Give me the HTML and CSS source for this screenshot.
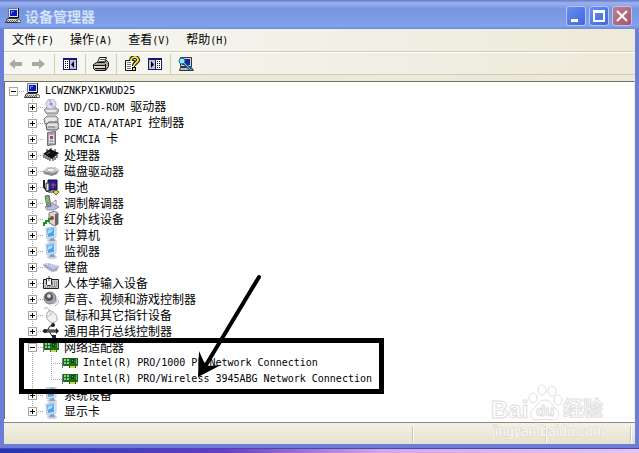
FILE: index.html
```
<!DOCTYPE html>
<html lang="zh-CN">
    <head>
        <meta charset="UTF-8" />
        <meta name="viewport" content="width=device-width, initial-scale=1.0" />
        <title>设备管理器</title>
        <link rel="stylesheet" href="styles.css">
    </head>
    <body>
        <!-- Shared icons -->
        <svg class="sprite" aria-hidden="true">
            <symbol id="pc" viewBox="0 0 16 16">
                <path d="M4 0h9v9H4z" fill="#e4e4ec" />
                <path d="M3.5 9.5v-9h9" fill="none" stroke="#777" />
                <path d="M13 0h1v10H4V9h9z" fill="#111" />
                <path d="M5 2h7v6H5z" fill="#0a18c8" />
                <path d="M6 3h3v1H7v2H6z" fill="#5a8cff" />
                <path d="M2.500 10.500h10l2 4h-14z" fill="#d4d4d4" stroke="#333" />
                <path d="M3 12.500h9M2 13.500h9" stroke="#666" stroke-dasharray="1 1" />
                <path d="M12.500 14.500c-1-4 4-4 3 0z" fill="#eee" stroke="#555" />
            </symbol>
            <symbol id="monitor" viewBox="0 0 16 16">
                <ellipse cx="9" cy="14" rx="5" ry="2" fill="#ccd3e4" />
                <path d="M7 11h4l1 3H6z" fill="#8e9ac0" />
                <path d="M3 1l10-1v10l-9 2z" fill="#dbe7f5" stroke="#b4c6de" />
                <path d="M4 2l7-1v8l-6 1z" fill="#49a4e8" />
                <path d="M5 3l5-1-1 3-4 2z" fill="#a6dcfb" />
            </symbol>
            <symbol id="card" viewBox="0 0 16 16">
                <path d="M1 3h15v8h-2v2H7v-2H1z" fill="#176b22" />
                <path d="M0 3h1v10H0z" fill="#777" />
                <path d="M2 4h2v2H2zM5 4h2v2H5zM2 7h2v2H2zM5 7h2v2H5z" fill="#8fd28a" />
                <path d="M9 4h4v4H9z" fill="#0c4a14" />
                <path d="M10 5h1v1h-1zM12 6h1v1h-1zM14 4h1v5h-1z" fill="#58b851" />
                <path d="M8 11h5v2H8z" fill="#e3cf35" />
            </symbol>
        </svg>

        <div class="window">
            <header class="titlebar">
                <svg class="icon"><use href="#pc" /></svg>
                <h1>设备管理器</h1>
                <div class="controls">
                    <button class="control" aria-label="最小化"><svg viewBox="0 0 18 18"><path d="M4 12h7v3H4z" fill="#fff" /></svg></button>
                    <button class="control" aria-label="最大化"><svg viewBox="0 0 18 18"><path d="M4 4h10v10H4zM4 5h10" fill="none" stroke="#fff" stroke-width="2" /></svg></button>
                    <button class="control close" aria-label="关闭"><svg viewBox="0 0 18 18"><path d="M4 4l10 10M14 4L4 14" stroke="#fff" stroke-width="2" /></svg></button>
                </div>
            </header>

            <nav class="menubar">
                <button>文件<span class="latin">(F)</span></button>
                <button>操作<span class="latin">(A)</span></button>
                <button>查看<span class="latin">(V)</span></button>
                <button>帮助<span class="latin">(H)</span></button>
            </nav>

            <div class="toolbar">
                <div class="group">
                    <button aria-label="后退"><svg class="icon" viewBox="0 0 16 16"><path d="M1 8l6-5v3h7v4H7v3z" fill="#aaa99a" /></svg></button>
                    <button aria-label="前进"><svg class="icon" viewBox="0 0 16 16"><path d="M14 8L8 3v3H1v4h7v3z" fill="#aaa99a" /></svg></button>
                </div>
                <div class="group">
                    <button aria-label="显示控制台树"><svg class="icon" viewBox="0 0 16 16">
                        <path d="M1 2h14v12H1z" fill="#17176f" />
                        <path d="M2 4h5v9H2z" fill="#fff" />
                        <path d="M8 4h6v9H8z" fill="#c3c3d8" />
                        <path d="M3 5h1v1H3zM5 5h1v1H5zM3 7h1v1H3zM5 7h1v1H5zM3 9h1v1H3zM5 9h1v1H5zM3 11h1v1H3zM5 11h1v1H5z" />
                        <path d="M12 5v7L9 8.500z" />
                    </svg></button>
                </div>
                <div class="group">
                    <button aria-label="打印"><svg class="icon" viewBox="0 0 16 16">
                        <path d="M4.500 6.500l2-5h7l-2 5z" fill="#fff" stroke="#111" />
                        <path d="M7 3.500h5M6 5.500h5" stroke="#555" />
                        <path d="M.5 8.500l3-2h8l2-2 2 2v4l-3 4h-10l-2-2z" fill="#a5a59c" stroke="#111" />
                        <path d="M1 9h11v3H1z" fill="#deddd0" />
                        <path d="M1 9.500h11M2 12.500h10M12.500 8v6" stroke="#111" />
                        <path d="M9 11.500h2" stroke="#e5d21a" />
                    </svg></button>
                </div>
                <div class="group">
                    <button aria-label="帮助"><svg class="icon" viewBox="0 0 16 16">
                        <path d="M1.500 4.500h9v10h-9z" fill="#fff" stroke="#111" />
                        <path d="M3 6.500h4M3 8.500h4M3 10.500h4M3 12.500h4" stroke="#777" />
                        <path d="M7 5c0-5 7-5 7-1 0 3-4 2-4 6" fill="none" stroke="#111" stroke-width="4" />
                        <path d="M7 5c0-5 7-5 7-1 0 3-4 2-4 6" fill="none" stroke="#f5e32a" stroke-width="2" />
                        <path d="M8 11h4v4H8z" />
                        <path d="M9 12h2v2H9z" fill="#f5e32a" />
                    </svg></button>
                    <button aria-label="显示操作窗格"><svg class="icon" viewBox="0 0 16 16">
                        <path d="M1 2h14v12H1z" fill="#17176f" />
                        <path d="M2 4h6v9H2z" fill="#c3c3d8" />
                        <path d="M9 4h5v9H9z" fill="#fff" />
                        <path d="M10 5h1v1h-1zM12 5h1v1h-1zM10 7h1v1h-1zM12 7h1v1h-1zM10 9h1v1h-1zM12 9h1v1h-1zM10 11h1v1h-1zM12 11h1v1h-1z" />
                        <path d="M4 5v7l3-3.500z" />
                    </svg></button>
                </div>
                <div class="group">
                    <button aria-label="扫描硬件改动"><svg class="icon" viewBox="0 0 16 16">
                        <path d="M2.500 1.500h11v9h-11z" fill="#d8d8d8" stroke="#333" />
                        <path d="M4 3h8v6H4z" fill="#1420a4" />
                        <path d="M2.500 11.500h11l2 3h-14z" fill="#bbb" stroke="#333" />
                        <circle cx="4" cy="5" r="3" fill="#8de6f5" stroke="#176c9c" />
                        <path d="M6 7l7 7" stroke="#125795" stroke-width="3" />
                        <path d="M6 7l7 7" stroke="#56d2ed" />
                    </svg></button>
                </div>
            </div>

            <main class="pane">
                <ul class="tree">
                    <li>
                        <div class="row"><button class="toggle open" aria-label="折叠"></button><svg class="icon"><use href="#pc" /></svg><span class="latin">LCWZNKPX1KWUD25</span></div>
                        <ul>
                            <li><div class="row"><button class="toggle" aria-label="展开"></button><svg class="icon" viewBox="0 0 16 16">
                                <path d="M1 11l3-3h8l4 3-2 4H4z" fill="#b9b9bd" stroke="#888" />
                                <path d="M2 11h12l-2 2H4z" fill="#eee" />
                                <circle cx="8" cy="5" r="5" fill="#dfe0f3" stroke="#b4b4c4" />
                                <path d="M8 5l-3-4 3-1zM8 5l4 3-2 2z" fill="#b5b8ef" />
                                <circle cx="8" cy="5" r="1" fill="#fff" stroke="#777" />
                            </svg><span><span class="latin">DVD/CD-ROM </span>驱动器</span></div></li>
                            <li><div class="row"><button class="toggle" aria-label="展开"></button><svg class="icon" viewBox="0 0 16 16">
                                <path d="M1 4l3-3h9l2 2v4l-2 2H2z" fill="#d4d4d4" stroke="#777" />
                                <path d="M2 4h11M3 6h9" stroke="#fff" />
                                <path d="M3 10l3-3h8l2 2v4l-2 2H4z" fill="#c9c9c9" stroke="#555" />
                                <path d="M4 10h10" stroke="#fff" />
                                <path d="M5 12h7" stroke="#777" />
                            </svg><span><span class="latin">IDE ATA/ATAPI </span>控制器</span></div></li>
                            <li><div class="row"><button class="toggle" aria-label="展开"></button><svg class="icon" viewBox="0 0 16 16">
                                <path d="M4.500 1.500l8-1v13l-8 1z" fill="#a6a6b2" stroke="#6c6c76" />
                                <path d="M6 4h5v8H6z" fill="#dedee8" />
                                <path d="M7 5h3v3H7z" fill="#b44" />
                                <path d="M7 10h3" stroke="#667" />
                            </svg><span><span class="latin">PCMCIA </span>卡</span></div></li>
                            <li><div class="row"><button class="toggle" aria-label="展开"></button><svg class="icon" viewBox="0 0 16 16">
                                <path d="M0 7l7-5 9 4-7 6z" fill="#111" />
                                <path d="M1 8v3M3 9v3M5 10v3M7 11v3M10 11v3M12 10v3M14 8v3M4 2v3M12 2v4M8 1v2" stroke="#111" />
                                <path d="M4 7l3-2" stroke="#777" />
                            </svg><span>处理器</span></div></li>
                            <li><div class="row"><button class="toggle" aria-label="展开"></button><svg class="icon" viewBox="0 0 16 16">
                                <path d="M0 8l5-4h7l4 3-2 4-5 2-8-2z" fill="#8e8e91" />
                                <path d="M0 8l5-4h7l4 3-6 3z" fill="#d6d6d8" />
                                <ellipse cx="8" cy="7" rx="4" ry="2" fill="#f3f3f3" stroke="#aaa" />
                                <path d="M11 11h2" stroke="#4b4" />
                            </svg><span>磁盘驱动器</span></div></li>
                            <li><div class="row"><button class="toggle" aria-label="展开"></button><svg class="icon" viewBox="0 0 16 16">
                                <path d="M1 1v7l3 4h4" fill="none" stroke="#222" stroke-width="2" />
                                <path d="M5 1h9v10H5z" fill="#1622a8" stroke="#111" />
                                <path d="M3 4h3v8H3z" fill="#e2e2e2" stroke="#333" />
                                <path d="M10 4v5M8 6h5" stroke="#f33" />
                                <path d="M6 12h7l1 2H5z" fill="#888" />
                                <path d="M10 13l3-2 3 2-3 3z" fill="#e4d64b" stroke="#5d5b22" />
                            </svg><span>电池</span></div></li>
                            <li><div class="row"><button class="toggle" aria-label="展开"></button><svg class="icon" viewBox="0 0 16 16">
                                <path d="M2 12l7-4 7 4-5 3H4z" fill="#bdbddb" stroke="#9292b5" />
                                <path d="M2 1l4-1 2 11-4 1z" fill="#89958b" stroke="#65716a" />
                                <path d="M3 3l2-1 1 5H4z" fill="#6bd15d" />
                                <path d="M9 8l4-3v5" fill="none" stroke="#8888aa" />
                            </svg><span>调制解调器</span></div></li>
                            <li><div class="row"><button class="toggle" aria-label="展开"></button><svg class="icon" viewBox="0 0 16 16">
                                <path d="M6 2l6-2 3 2v11l-3 2-6-3z" fill="#d6d6d6" stroke="#777" />
                                <path d="M12 3l3-1v11l-3 2z" fill="#666" />
                                <circle cx="9" cy="7" r="2" fill="#d22a2a" />
                                <path d="M1 15v-3h2v-2h3V8h2" fill="none" stroke="#15952a" stroke-width="2" />
                            </svg><span>红外线设备</span></div></li>
                            <li><div class="row"><button class="toggle" aria-label="展开"></button><svg class="icon"><use href="#monitor" /></svg><span>计算机</span></div></li>
                            <li><div class="row"><button class="toggle" aria-label="展开"></button><svg class="icon"><use href="#monitor" /></svg><span>监视器</span></div></li>
                            <li><div class="row"><button class="toggle" aria-label="展开"></button><svg class="icon" viewBox="0 0 16 16">
                                <path d="M0 5l5-1 11 3-2 5-5 1-8-5z" fill="#a8a8cc" />
                                <path d="M1 5l4-1 10 3-5 3z" fill="#dedef4" />
                                <path d="M3 6l8 3M5 5l8 3" stroke="#8585b0" stroke-dasharray="1 1" />
                            </svg><span>键盘</span></div></li>
                            <li><div class="row"><button class="toggle" aria-label="展开"></button><svg class="icon" viewBox="0 0 16 16">
                                <path d="M.5 4.500h15v9H.5z" fill="#ccc" stroke="#222" />
                                <path d="M9 7h6M9 9h6M9 11h6M2 12h12" stroke="#666" stroke-dasharray="1 1" />
                                <path d="M3.500 3.500h5v6l-1 1h-3l-1-1z" fill="#fff" stroke="#222" />
                                <path d="M6 1v5" stroke="#333" />
                            </svg><span>人体学输入设备</span></div></li>
                            <li><div class="row"><button class="toggle" aria-label="展开"></button><svg class="icon" viewBox="0 0 16 16">
                                <ellipse cx="7" cy="7" rx="6" ry="6" fill="#a5a5a5" stroke="#777" />
                                <ellipse cx="6" cy="6" rx="4" ry="4" fill="#555" />
                                <circle cx="6" cy="5" r="2" fill="#ddd" />
                                <path d="M11 13c2-1 3-3 3-5M12 15c2-1 4-4 4-6" fill="none" stroke="#a2a2dc" />
                            </svg><span>声音、视频和游戏控制器</span></div></li>
                            <li><div class="row"><button class="toggle" aria-label="展开"></button><svg class="icon" viewBox="0 0 16 16">
                                <path d="M1 2c3-3 5 0 6 3" fill="none" stroke="#aaa" />
                                <path d="M4 6c2-4 7-2 9 2 4 6-3 10-7 6C3 11 3 9 4 6z" fill="#f1f1f1" stroke="#aaa" />
                                <path d="M4 9c3 0 5-1 6-5M6 4l2 4" fill="none" stroke="#bbb" />
                            </svg><span>鼠标和其它指针设备</span></div></li>
                            <li><div class="row"><button class="toggle" aria-label="展开"></button><svg class="icon" viewBox="0 0 16 16">
                                <path d="M1 8h13M4 8l3-5h3M6 8l3 5h2" fill="none" stroke="#222" />
                                <path d="M1 7h13v2H1z" fill="#888" stroke="#222" />
                                <circle cx="2" cy="8" r="2" fill="#222" />
                                <circle cx="10" cy="2" r="2" fill="#222" />
                                <path d="M9 12h4v3H9zM13 5l3 3-3 3z" fill="#222" />
                            </svg><span>通用串行总线控制器</span></div></li>
                            <li>
                                <div class="row"><button class="toggle open" aria-label="折叠"></button><svg class="icon"><use href="#card" /></svg><span>网络适配器</span></div>
                                <ul>
                                    <li><div class="row leaf"><svg class="icon"><use href="#card" /></svg><span class="latin">Intel(R) PRO/1000 PL Network Connection</span></div></li>
                                    <li><div class="row leaf"><svg class="icon"><use href="#card" /></svg><span class="latin">Intel(R) PRO/Wireless 3945ABG Network Connection</span></div></li>
                                </ul>
                            </li>
                            <li><div class="row"><button class="toggle" aria-label="展开"></button><svg class="icon"><use href="#monitor" /></svg><span>系统设备</span></div></li>
                            <li><div class="row"><button class="toggle" aria-label="展开"></button><svg class="icon"><use href="#monitor" /></svg><span>显示卡</span></div></li>
                        </ul>
                    </li>
                </ul>
            </main>

            <footer class="statusbar">
                <div></div>
                <div></div>
                <div></div>
            </footer>
        </div>

        <!-- Highlight box and arrow drawn over the network adapters -->
        <svg class="callout" width="400" height="400" aria-hidden="true">
            <rect x="21.5" y="340.5" width="360" height="51" fill="none" stroke="#000" stroke-width="5" />
            <path d="M259 277L206 365" stroke="#000" stroke-width="4" stroke-linecap="round" />
            <path d="M198 377L199 351L204 362L209 366L221 365z" />
        </svg>

        <svg class="watermark" width="120" height="60" aria-hidden="true">
            <g class="outline">
                <text x="3" y="38" class="brand">Bai</text>
                <ellipse cx="45" cy="18" rx="4" ry="5" />
                <ellipse cx="54" cy="10" rx="4" ry="5" />
                <ellipse cx="64" cy="11" rx="4" ry="5" />
                <ellipse cx="70" cy="20" rx="4" ry="5" />
                <path d="M57 20c5 0 7 4 10 8 7 6 3 13-4 12-4-1-8-1-12 0-8 1-11-6-5-12 4-4 6-8 11-8z" />
                <text x="48" y="36" class="du">du</text>
                <text x="75" y="36" class="jy">经验</text>
            </g>
            <text x="4" y="56" class="url">jingyan.baidu.com</text>
        </svg>
    </body>
</html>
```

FILE: styles.css
```
* {
    box-sizing: border-box;
}
body {
    margin: 0;
    min-height: 100vh;
    display: flex;
    flex-direction: column;
    position: relative;
    padding-bottom: 4px;
    background: linear-gradient(90deg, #2535b0, #6a3cc4 35%, #d9a5e4 60%, #e6c4ee);
    font-family: "Noto Sans CJK SC", sans-serif;
    font-size: 12px;
    line-height: 16px;
    color: #000;
}
button {
    padding: 0;
    border: none;
    background: none;
    font: inherit;
    color: inherit;
}
.sprite {
    display: none;
}
.icon {
    display: block;
    flex: none;
    width: 16px;
    height: 16px;
}
.latin {
    font-family: "DejaVu Sans Mono", monospace;
    font-size: 10px;
    white-space: pre;
}
.window {
    flex: 1;
    display: flex;
    flex-direction: column;
    padding: 0 4px 4px;
    background: #6b7dd6;
    border-bottom: 1px solid #3a4cb8;
}

/* Title bar */
.titlebar {
    display: flex;
    align-items: center;
    gap: 4px;
    height: 29px;
    margin: 0 -4px;
    padding: 2px 7px 0 5px;
    background: linear-gradient(#6878cc, #9bb3ee 3px, #7896e0 9px, #7c9ce6 20px, #84a2ea 26px, #6f88d8);
}
.titlebar h1 {
    flex: 1;
    margin: 0;
    font-size: 14px;
    line-height: 20px;
    color: #d3e2f9;
}
.controls {
    display: flex;
    gap: 3px;
}
.control {
    width: 20px;
    height: 20px;
    border: 1px solid #b4c6f4;
    border-radius: 3px;
    background: linear-gradient(135deg, #6a8ef0, #3f66e0);
}
.control svg {
    display: block;
    width: 18px;
    height: 18px;
}
.control.close {
    background: linear-gradient(135deg, #c08090, #aa5268);
}

/* Menu and toolbar */
.menubar,
.toolbar {
    display: flex;
    align-items: center;
    height: 23px;
    background: linear-gradient(90deg, #f7f7f4, #edead9);
    border-bottom: 1px solid #cfccba;
}
.menubar {
    gap: 16px;
    padding-left: 8px;
}
.toolbar {
    padding-left: 4px;
    border-top: 1px solid #fff;
}
.group {
    display: flex;
    gap: 7px;
    height: 20px;
    align-items: center;
}
.group + .group {
    margin-left: 7px;
    padding-left: 7px;
    border-left: 1px solid #cfccba;
}

/* Device tree */
.pane {
    flex: 1;
    border-top: 6px solid #ece9d8;
    background: #fff;
}
.tree {
    height: 100%;
    padding: 1px 0 0 4px;
    border-top: 1px solid #716f64;
    border-left: 1px solid #716f64;
    border-right: 1px solid #f1efe2;
}
ul {
    margin: 0;
    padding: 0;
    list-style: none;
}
ul ul {
    margin-left: 19px;
}
ul ul > li {
    background: repeating-linear-gradient(#a5a5a5 0 1px, transparent 1px 2px) 4px 0 / 1px 100% no-repeat;
}
ul ul > li:last-child {
    background-size: 1px 8px;
}
.row {
    display: flex;
    align-items: center;
    height: 16px;
    white-space: nowrap;
    background: repeating-linear-gradient(90deg, #a5a5a5 0 1px, transparent 1px 2px) 4px 8px / 11px 1px no-repeat;
}
.row .icon {
    margin-right: 5px;
}
.leaf {
    padding-left: 15px;
}
.toggle {
    width: 9px;
    height: 9px;
    margin-right: 6px;
    border: 1px solid #a9a79c;
    background:
        linear-gradient(#000, #000) center / 5px 1px no-repeat,
        linear-gradient(#000, #000) center / 1px 5px no-repeat,
        #fff;
}
.toggle.open {
    background: linear-gradient(#000, #000) center / 5px 1px no-repeat, #fff;
}

/* Status bar */
.statusbar {
    display: grid;
    grid-template-columns: 410fr 133fr 85fr;
    height: 22px;
    padding: 3px 3px 2px 0;
    background: linear-gradient(#f3f1e6, #e6e2cf);
    border-top: 1px solid #8e8c80;
}
.statusbar div {
    border-right: 1px solid #fff;
    box-shadow: inset -1px 0 #cac6b4;
}

/* Overlays */
.callout {
    position: absolute;
    left: 0;
    top: 0;
    pointer-events: none;
}
.watermark {
    position: absolute;
    right: 31px;
    bottom: 13px;
    pointer-events: none;
    font-family: "Liberation Sans", "Noto Sans CJK SC", sans-serif;
}
.outline {
    fill: #fff;
    stroke: #dedede;
    font-weight: bold;
}
.brand {
    font-size: 24px;
}
.du {
    font-size: 15px;
}
.jy {
    font-size: 20px;
}
.url {
    font-size: 14px;
    fill: #fbfaf5;
    stroke: #d6d3c8;
    stroke-width: 1px;
    paint-order: stroke;
}
```
